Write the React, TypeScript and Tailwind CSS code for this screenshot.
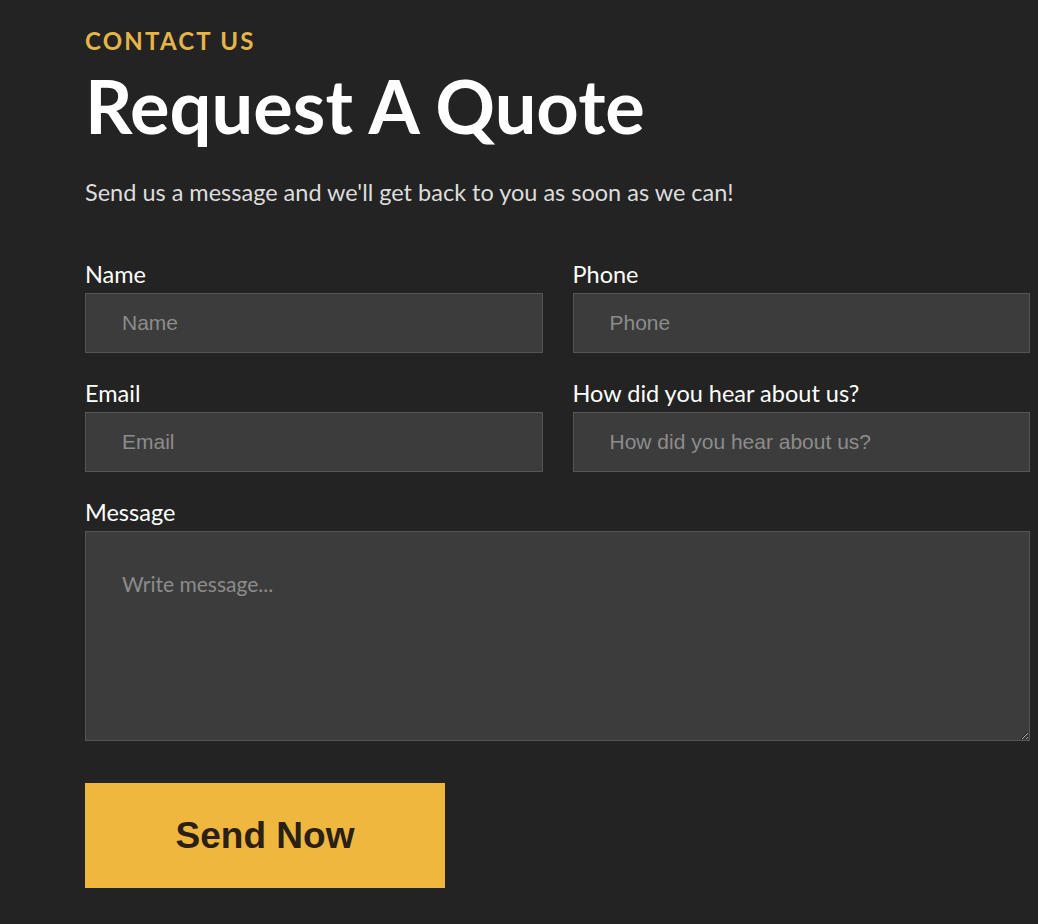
const lato = { fontFamily: 'Lato, "Open Sans", sans-serif' };

function Field({ label, placeholder }: { label: string; placeholder: string }) {
  return (
    <div className="flex flex-col">
      <label className="text-[23.5px] leading-[28px] text-white mb-[5px]">{label}</label>
      <input
        placeholder={placeholder}
        className="h-[60px] bg-[#3c3c3c] border border-[#555555] pl-[36px] text-[21px] text-white placeholder:text-[#8c8c8c] outline-none font-['Liberation_Sans',Arial,sans-serif]"
      />
    </div>
  );
}

export default function App() {
  return (
    <div className="min-h-[924px] bg-[#232323] pl-[85px] pr-[8px] pt-[26px]" style={lato}>
      <div className="text-[24px] leading-[30px] font-bold tracking-[2.2px] text-[#e5b547]">CONTACT US</div>
      <h1 className="text-[74px] leading-[96px] font-bold text-white mt-[2px]">Request A Quote</h1>
      <p className="text-[23.5px] leading-[30px] text-[#dddddd] mt-[23px]">
        Send us a message and we'll get back to you as soon as we can!
      </p>
      <form className="mt-[53px]" onSubmit={(e) => e.preventDefault()}>
        <div className="grid grid-cols-2 gap-x-[30px] gap-y-[26px]">
          <Field label="Name" placeholder="Name" />
          <Field label="Phone" placeholder="Phone" />
          <Field label="Email" placeholder="Email" />
          <Field label="How did you hear about us?" placeholder="How did you hear about us?" />
        </div>
        <div className="flex flex-col mt-[26px]">
          <label className="text-[23.5px] leading-[28px] text-white mb-[5px]">Message</label>
          <textarea
            placeholder="Write message..."
            className="h-[210px] bg-[#3c3c3c] border border-[#555555] px-[36px] pt-[36px] text-[21px] text-white placeholder:text-[#8c8c8c] outline-none"
          />
        </div>
        <button
          type="submit"
          className="mt-[42px] w-[360px] h-[105px] bg-[#efb73e] text-[#2a2013] text-[37px] font-bold font-['Liberation_Sans',Arial,sans-serif]"
        >
          Send Now
        </button>
      </form>
    </div>
  );
}
